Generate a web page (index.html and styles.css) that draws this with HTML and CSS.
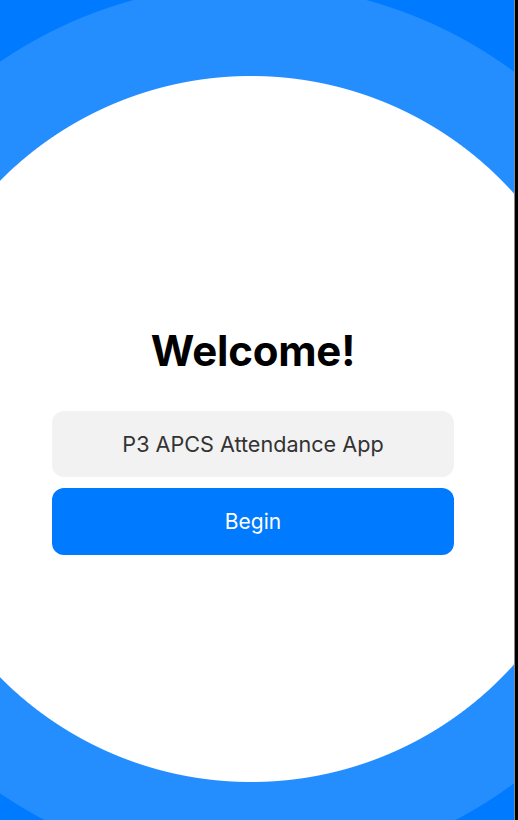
FILE: index.html
```html
<!DOCTYPE html>
<html>
<head>
<meta charset="utf-8">
<link rel="stylesheet" href="styles.css">
</head>
<body>
<div class="screen">
  <main class="main">
    <h1 class="title">Welcome!</h1>
    <div class="field">P3 APCS Attendance App</div>
    <button class="begin">Begin</button>
  </main>
  <div class="edge"></div>
</div>
</body>
</html>
```
FILE: styles.css
```css
html, body {
  margin: 0;
  padding: 0;
  background: #000;
}
.screen {
  display: flex;
  width: 518px;
  height: 820px;
  overflow: hidden;
}
.main {
  width: 514px;
  height: 820px;
  box-sizing: border-box;
  padding: 324px 60px 0 52px;
  display: flex;
  flex-direction: column;
  align-items: stretch;
  font-family: Inter, "Liberation Sans", sans-serif;
  background:
    radial-gradient(circle at 251px 429px, #ffffff 352.5px, rgba(255,255,255,0) 353.5px),
    radial-gradient(circle at 250px 427.5px, #258eff 442.5px, #007aff 443.5px);
}
.edge {
  width: 4px;
  height: 820px;
  background: #000;
  border-left: 1px solid #8a8a8a;
  box-sizing: border-box;
}
.title {
  margin: 0;
  text-align: center;
  font-size: 42px;
  font-weight: 700;
  line-height: 54px;
  color: #000;
  letter-spacing: -0.2px;
}
.field {
  margin-top: 33px;
  height: 66px;
  border-radius: 12px;
  background: #f2f2f2;
  color: #333;
  font-size: 21.6px;
  display: flex;
  align-items: center;
  justify-content: center;
}
.begin {
  margin-top: 11px;
  height: 67px;
  border: none;
  border-radius: 12px;
  background: #007aff;
  color: #fff;
  font-family: inherit;
  font-size: 21px;
  padding: 0;
}
```
